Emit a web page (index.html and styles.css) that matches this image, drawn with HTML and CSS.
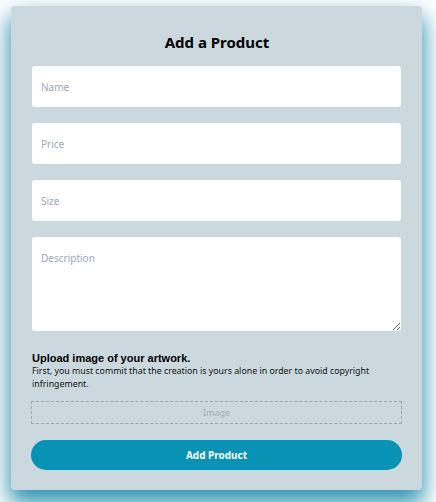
FILE: index.html
```html
<!DOCTYPE html>
<html>
<head>
<meta charset="utf-8">
<link rel="stylesheet" href="styles.css">
</head>
<body>
<div class="card">
  <h1 class="title">Add a Product</h1>
  <form class="form">
    <input class="field" type="text" placeholder="Name">
    <input class="field" type="text" placeholder="Price">
    <input class="field" type="text" placeholder="Size">
    <textarea class="field area" placeholder="Description"></textarea>
    <div class="upload">
      <h2 class="upload-title">Upload image of your artwork.</h2>
      <p class="upload-text">First, you must commit that the creation is yours alone in order to avoid copyright infringement.</p>
    </div>
    <div class="dropzone">Image</div>
    <button class="submit" type="button">Add Product</button>
  </form>
</div>
</body>
</html>
```
FILE: styles.css
```css
html, body {
  margin: 0;
  padding: 0;
  background: #ffffff;
}
body {
  font-family: "Noto Sans", "Open Sans", sans-serif;
  padding-top: 6px;
  min-height: 502px;
  box-sizing: border-box;
}
.card {
  width: 411px;
  box-sizing: border-box;
  margin-left: 11px;
  padding: 25px 20px 20px 21px;
  background: #cbd9de;
  border-radius: 4px;
  box-shadow: 0 12px 22px 2px rgba(10, 130, 162, 0.85);
}
.title {
  margin: 0 0 13px;
  text-align: center;
  font-size: 15px;
  line-height: 22px;
  font-weight: 700;
  color: #000;
}
.form {
  display: flex;
  flex-direction: column;
}
.field {
  display: block;
  box-sizing: border-box;
  width: 369px;
  height: 41px;
  margin: 0 0 16px 0;
  padding: 0 9px;
  border: none;
  border-radius: 3px;
  background: #ffffff;
  font-family: "Noto Sans", sans-serif;
  font-size: 10px;
  color: #333;
  outline: none;
}
.field::placeholder {
  color: #a0a6ba;
}
.area {
  height: 94px;
  padding: 14px 9px;
  resize: vertical;
  margin-bottom: 20px;
}
.upload-title {
  margin: 0;
  font-family: "Liberation Sans", Arial, sans-serif;
  font-size: 11px;
  line-height: 14px;
  font-weight: 700;
  color: #000;
}
.upload-text {
  margin: 0;
  font-size: 8.8px;
  line-height: 13px;
  color: #111;
  width: 352px;
}
.dropzone {
  box-sizing: border-box;
  width: 371px;
  height: 23px;
  margin: 10px 0 0 -1px;
  border: 1px dashed #9ba5b6;
  display: flex;
  align-items: center;
  justify-content: center;
  font-size: 9px;
  color: #a4abb7;
}
.submit {
  box-sizing: border-box;
  width: 371px;
  height: 30px;
  margin: 16px 0 0 -1px;
  border: none;
  border-radius: 15px;
  background: #0892b4;
  color: #ffffff;
  font-family: "Noto Sans", sans-serif;
  font-size: 10px;
  font-weight: 700;
  cursor: pointer;
}
```
